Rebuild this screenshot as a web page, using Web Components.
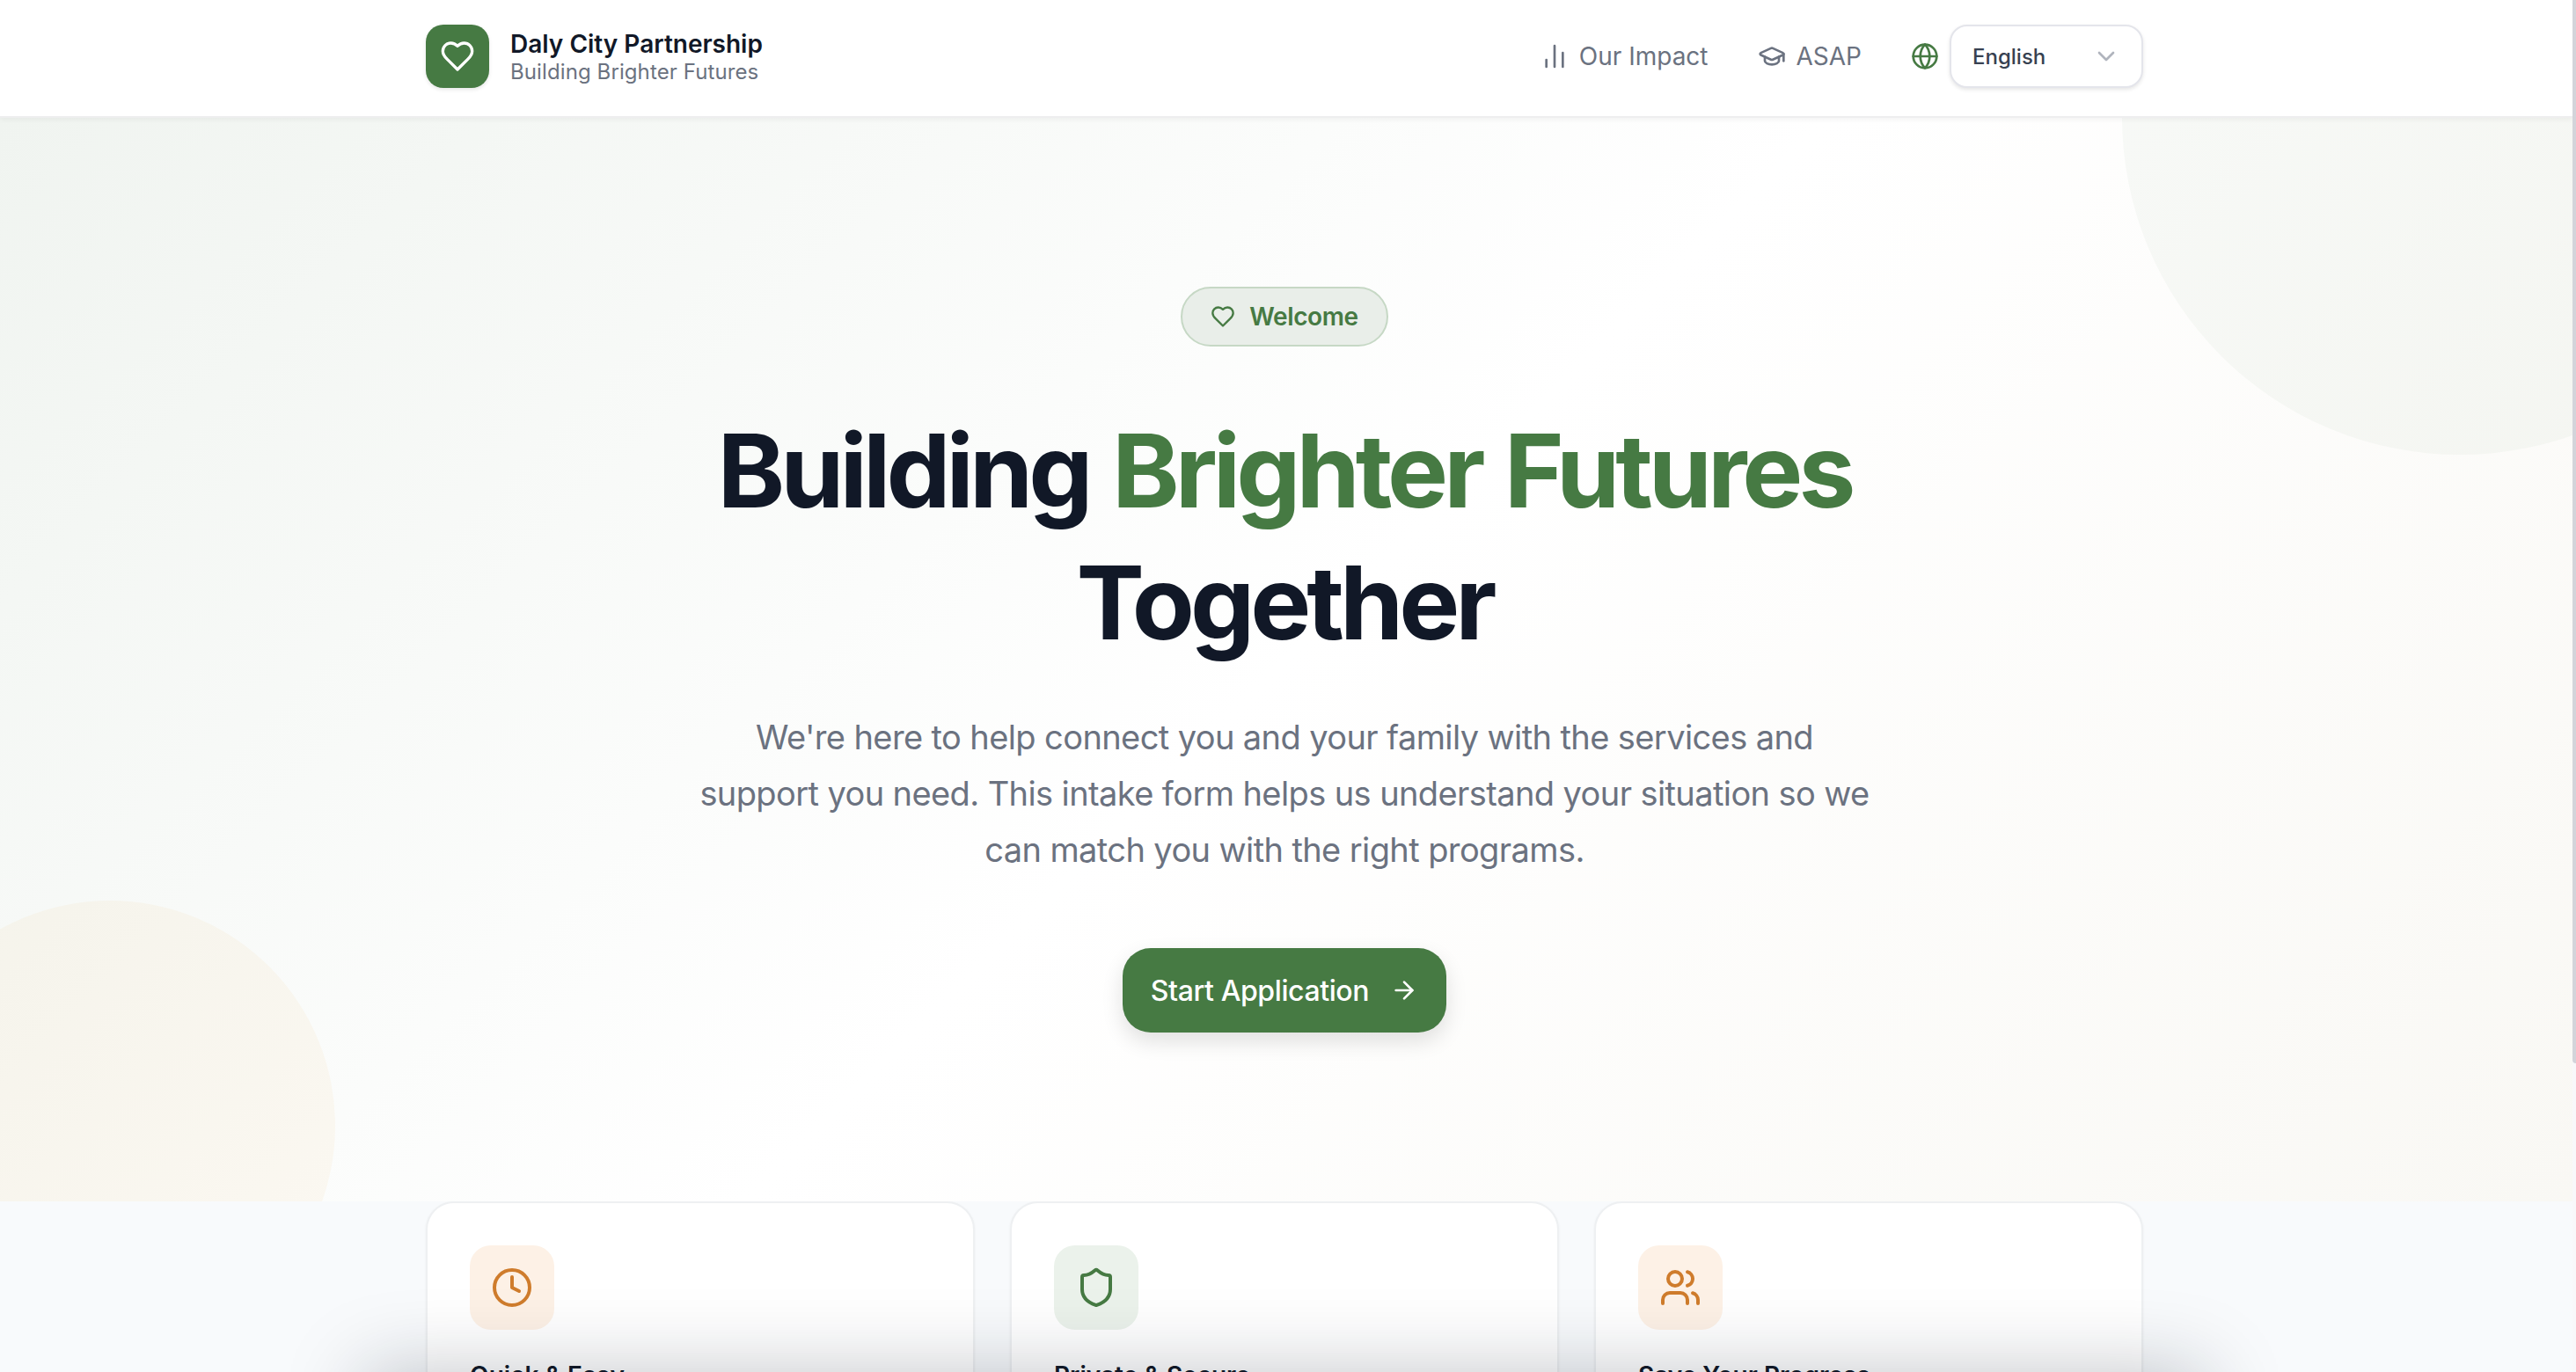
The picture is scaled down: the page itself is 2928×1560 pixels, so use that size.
<!DOCTYPE html>
<html lang="en">
<head>
<meta charset="utf-8">
<title>Daly City Partnership</title>
<style>
    html, body { margin: 0; padding: 0; height: 100%; overflow: hidden; }
    body { font-family: Inter, "Liberation Sans", sans-serif; background: #f8f8fa; color: #111827; }
    page-frame { height: 1560px; }
</style>
</head>
<body>
<page-frame>
    <site-header>
        <nav-link slot="nav" icon="bars">Our Impact</nav-link>
        <nav-link slot="nav" icon="cap">ASAP</nav-link>
    </site-header>
    <hero-section></hero-section>
    <feature-row>
        <feature-card icon="clock" tone="amber">Quick &amp; Easy</feature-card>
        <feature-card icon="shield" tone="green">Private &amp; Secure</feature-card>
        <feature-card icon="users" tone="amber">Save Your Progress</feature-card>
    </feature-row>
</page-frame>
<script>
const ICONS = {
    heart: '<path d="M19 14c1.49-1.46 3-3.21 3-5.5A5.5 5.5 0 0 0 16.5 3c-1.76 0-3 .5-4.5 2-1.5-1.5-2.74-2-4.5-2A5.5 5.5 0 0 0 2 8.5c0 2.3 1.5 4.05 3 5.5l7 7Z"/>',
    bars: '<path d="M5 21v-6"/><path d="M12 21V3"/><path d="M19 21V9"/>',
    cap: '<path d="M21.42 10.922a1 1 0 0 0-.019-1.838L12.83 5.18a2 2 0 0 0-1.66 0L2.6 9.08a1 1 0 0 0 0 1.832l8.57 3.908a2 2 0 0 0 1.66 0z"/><path d="M22 10v6"/><path d="M6 12.5V16a6 3 0 0 0 12 0v-3.5"/>',
    globe: '<circle cx="12" cy="12" r="10"/><path d="M12 2a14.5 14.5 0 0 0 0 20 14.5 14.5 0 0 0 0-20"/><path d="M2 12h20"/>',
    chevron: '<path d="m6 9 6 6 6-6"/>',
    arrow: '<path d="M5 12h14"/><path d="m12 5 7 7-7 7"/>',
    clock: '<circle cx="12" cy="12" r="10"/><polyline points="12 6 12 12 16 14"/>',
    shield: '<path d="M20 13c0 5-3.5 7.5-7.66 8.95a1 1 0 0 1-.67-.01C7.5 20.5 4 18 4 13V6a1 1 0 0 1 1-1c2 0 4.5-1.2 6.24-2.72a1.17 1.17 0 0 1 1.52 0C14.51 3.81 17 5 19 5a1 1 0 0 1 1 1z"/>',
    users: '<path d="M16 21v-2a4 4 0 0 0-4-4H6a4 4 0 0 0-4 4v2"/><circle cx="9" cy="7" r="4"/><path d="M22 21v-2a4 4 0 0 0-3-3.87"/><path d="M16 3.13a4 4 0 0 1 0 7.75"/>'
};

function svg(name, size, stroke) {
    return `<svg width="${size}" height="${size}" viewBox="0 0 24 24" fill="none" stroke="currentColor" stroke-width="${stroke || 2}" stroke-linecap="round" stroke-linejoin="round">${ICONS[name]}</svg>`;
}

class BaseElement extends HTMLElement {
    constructor(markup) {
        super();
        const t = document.createElement('template');
        t.innerHTML = markup;
        this.attachShadow({mode: 'open'});
        this.shadowRoot.appendChild(t.content.cloneNode(true));
    }
}

class PageFrame extends BaseElement {
    constructor() {
        super(`
            <style>
                :host { display: block; position: relative; overflow: hidden; padding-right: 4px; }
                /* scrollbar thumb */
                .scrollbar { position: absolute; top: 0; right: 0; width: 4px; height: 1209px; background: #d3d4da; border-bottom-left-radius: 4px; z-index: 20; }
                /* shadow of something parked just below the fold */
                .fade { position: absolute; left: 415px; right: 423px; bottom: -100px; height: 100px; box-shadow: 0 0 90px rgba(17, 24, 39, .25); z-index: 10; }
            </style>
            <slot></slot>
            <div class="fade"></div>
            <div class="scrollbar"></div>
        `);
    }
}

class SiteHeader extends BaseElement {
    constructor() {
        super(`
            <style>
                :host { display: block; position: relative; z-index: 5; box-sizing: border-box; height: 134px; padding: 0 4px 4px 0; background: #fff; border-bottom: 2px solid #eeeeef; box-shadow: 0 2px 6px rgba(0,0,0,.05); }
                .inner { width: 1952px; height: 100%; margin: 0 auto; display: flex; align-items: center; justify-content: space-between; }
                .brand { display: flex; align-items: center; gap: 24px; }
                .logo { width: 72px; height: 72px; border-radius: 20px; background: #467a43; color: #fff; display: flex; align-items: center; justify-content: center; box-shadow: 0 2px 4px rgba(0,0,0,.1); }
                .text { padding-top: 2px; }
                .name { font-size: 28px; font-weight: 600; line-height: 32px; color: #111827; }
                .tag { font-size: 24px; line-height: 28px; color: #6b7280; letter-spacing: .1px; margin-top: 2px; }
                nav { display: flex; align-items: center; gap: 56px; }
                .lang { display: flex; align-items: center; gap: 12px; color: #467a43; }
                .lang svg { display: block; }
            </style>
            <div class="inner">
                <div class="brand">
                    <div class="logo">${svg('heart', 40)}</div>
                    <div class="text">
                        <div class="name">Daly City Partnership</div>
                        <div class="tag">Building Brighter Futures</div>
                    </div>
                </div>
                <nav>
                    <slot name="nav"></slot>
                    <div class="lang">${svg('globe', 32)}<lang-select>English</lang-select></div>
                </nav>
            </div>
        `);
    }
}

class NavLink extends BaseElement {
    constructor() {
        super(`
            <style>
                :host { display: flex; align-items: center; gap: 12px; font-size: 28px; color: #6b7280; }
                svg { display: block; }
            </style>
            <span id="icon"></span>
            <slot></slot>
        `);
    }
    connectedCallback() {
        const icon = this.shadowRoot.getElementById('icon');
        icon.innerHTML = svg(this.getAttribute('icon'), 32);
    }
}

class LangSelect extends BaseElement {
    constructor() {
        super(`
            <style>
                :host { display: flex; align-items: center; justify-content: space-between; box-sizing: border-box; width: 220px; height: 72px; padding: 0 24px 0 24px; background: #fff; border: 2px solid #e4e5eb; border-radius: 20px; box-shadow: 0 2px 4px rgba(0,0,0,.1); font-size: 24px; font-weight: 500; color: #374151; }
                span { color: #b0b4bd; display: flex; }
            </style>
            <slot></slot>
            <span>${svg('chevron', 32)}</span>
        `);
    }
}

class HeroSection extends BaseElement {
    constructor() {
        super(`
            <style>
                :host { display: flex; flex-direction: column; align-items: center; position: relative; overflow: hidden; height: 1232px; box-sizing: border-box; padding: 192px 4px 0 0; background: linear-gradient(135deg, #f0f4f0 0%, #ffffff 50%, #f9f8f4 100%); }
                .circle { position: absolute; border-radius: 50%; }
                .c1 { width: 768px; height: 768px; left: 2412px; top: -385px; background: rgba(70, 122, 67, .04); }
                .c2 { width: 512px; height: 512px; left: -131px; top: 890px; background: rgba(235, 165, 30, .05); }
                .pill { position: relative; display: flex; align-items: center; gap: 16px; box-sizing: border-box; height: 68px; padding: 0 32px; border-radius: 34px; background: #e9eee9; border: 2px solid #c6d8c5; color: #467a43; font-size: 28px; font-weight: 600; letter-spacing: -.4px; }
                h1 { position: relative; margin: 66px 0 0; width: 1500px; text-align: center; font-size: 116px; line-height: 150px; font-weight: 700; letter-spacing: -5px; word-spacing: 4px; color: #111827; }
                h1 em { font-style: normal; color: #467a43; }
                p { position: relative; margin: 46px 0 0; width: 1332px; text-align: center; font-size: 38px; line-height: 64px; letter-spacing: -.6px; color: #6b7280; }
                .cta { position: relative; margin-top: 80px; display: flex; align-items: center; gap: 24px; box-sizing: border-box; height: 96px; padding: 0 32px; border-radius: 32px; background: #467a43; color: #fff; font-size: 32px; font-weight: 500; letter-spacing: -.4px; box-shadow: 0 10px 24px rgba(0,0,0,.12); }
                svg { display: block; }
            </style>
            <div class="circle c1"></div>
            <div class="circle c2"></div>
            <div class="pill">${svg('heart', 28)}<span>Welcome</span></div>
            <h1>Building <em>Brighter Futures</em> Together</h1>
            <p>We're here to help connect you and your family with the services and support you need. This intake form helps us understand your situation so we can match you with the right programs.</p>
            <div class="cta"><span>Start Application</span>${svg('arrow', 32)}</div>
        `);
    }
}

class FeatureRow extends BaseElement {
    constructor() {
        super(`
            <style>
                :host { display: grid; grid-template-columns: repeat(3, 624px); gap: 40px; justify-content: center; padding-right: 4px; background: #f8fafc; }
            </style>
            <slot></slot>
        `);
    }
}

class FeatureCard extends BaseElement {
    constructor() {
        super(`
            <style>
                :host { display: block; box-sizing: border-box; height: 300px; padding: 48px; background: #fff; border: 2px solid #eef0f2; border-radius: 32px; box-shadow: 0 1px 3px rgba(0,0,0,.05); }
                .icon { width: 96px; height: 96px; border-radius: 24px; display: flex; align-items: center; justify-content: center; }
                :host([tone="amber"]) .icon { background: #fdf1e6; color: #cf7c2c; }
                :host([tone="green"]) .icon { background: #ebf2eb; color: #467a43; }
                .title { margin-top: 35px; font-size: 28px; font-weight: 600; color: #111827; }
            </style>
            <div class="icon" id="icon"></div>
            <div class="title"><slot></slot></div>
        `);
    }
    connectedCallback() {
        this.shadowRoot.getElementById('icon').innerHTML = svg(this.getAttribute('icon'), 48);
    }
}

customElements.define('page-frame', PageFrame);
customElements.define('site-header', SiteHeader);
customElements.define('nav-link', NavLink);
customElements.define('lang-select', LangSelect);
customElements.define('hero-section', HeroSection);
customElements.define('feature-row', FeatureRow);
customElements.define('feature-card', FeatureCard);
</script>
</body>
</html>
